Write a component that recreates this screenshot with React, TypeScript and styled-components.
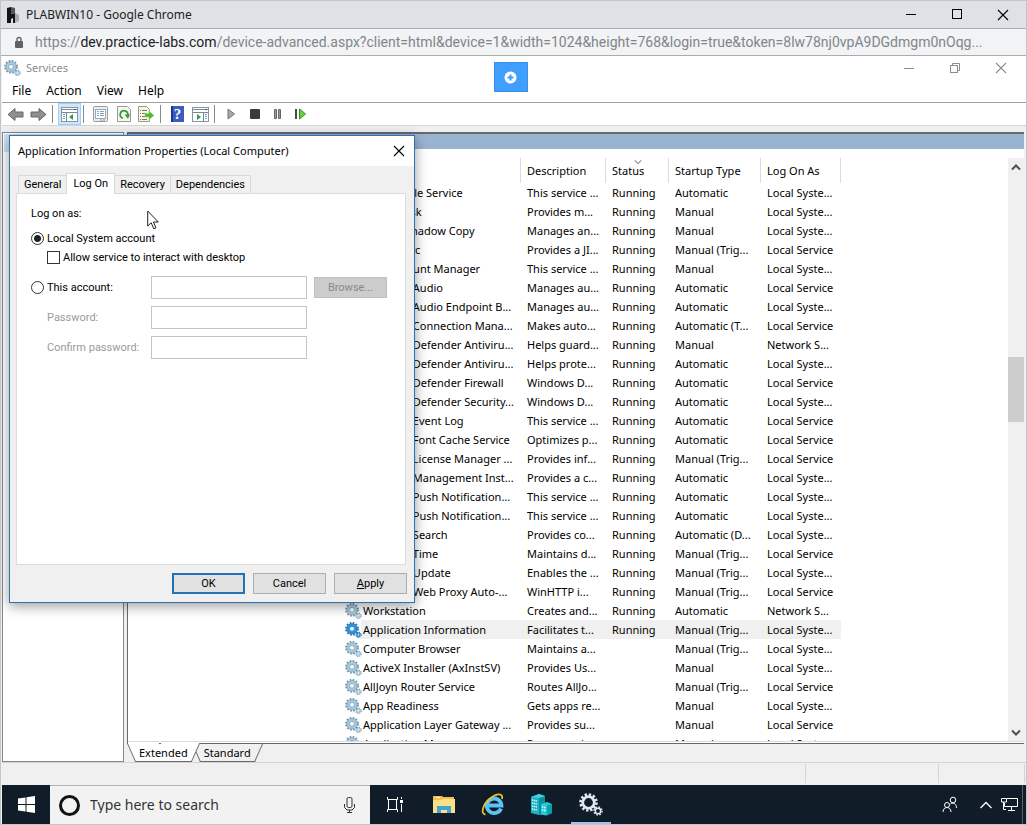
import React from 'react';
import styled, { createGlobalStyle, css } from 'styled-components';

const GlobalStyle = createGlobalStyle`
  *, *::before, *::after { box-sizing: border-box; }
  html, body { margin: 0; padding: 0; }
  body { font-family: "Noto Sans", "Open Sans", sans-serif; font-size: 11px; line-height: 16px; color: #000; }
  button, input { font: inherit; color: inherit; margin: 0; }
  button { padding: 0; border: 0; background: none; }
  svg { display: block; flex: none; }
`;

/* ---------- Browser frame ---------- */

const BrowserWindow = styled.div`
  display: flex;
  flex-direction: column;
  height: 100vh;
  overflow: hidden;
  background: #f0f0f0;
  border: 1px solid #c3c5c9;
`;

const BrowserTitle = styled.header`
  display: flex;
  flex: none;
  align-items: center;
  gap: 5px;
  height: 28px;
  padding-left: 4px;
  background: #dee1e6;
  border-bottom: 1px solid #a9abae;
  color: #222;
`;

const BrowserName = styled.h1`
  flex: 1;
  margin: 0;
  font-size: 12px;
  font-weight: 400;
`;

const WindowButtons = styled.div<{ $muted?: boolean }>`
  display: flex;
  color: ${p => (p.$muted ? '#8c8c8c' : '#000')};
`;

const WindowButton = styled.button`
  display: flex;
  align-items: center;
  justify-content: center;
  width: 46px;
  height: 24px;
`;

const AddressBar = styled.div`
  display: flex;
  flex: none;
  align-items: center;
  gap: 11px;
  height: 27px;
  padding-left: 13px;
  background: #f1f3f4;
  border-bottom: 1px solid #a9abae;
`;

const Address = styled.div`
  flex: 1;
  overflow: hidden;
  font-family: Roboto, "Noto Sans", sans-serif;
  font-size: 14px;
  line-height: 20px;
  white-space: nowrap;
  color: #80868b;
  b { font-weight: 400; color: #202124; }
`;

/* ---------- Remote desktop ---------- */

const Desktop = styled.main`
  position: relative;
  display: flex;
  flex: 1;
  flex-direction: column;
  min-height: 0;
  padding-left: 1px;
`;

const OverlayButton = styled.button`
  position: absolute;
  top: 6px;
  left: 50%;
  display: flex;
  align-items: center;
  justify-content: center;
  width: 34px;
  height: 30px;
  margin-left: -20px;
  background: #409eff;
  border: 1px solid #3a8ee6;
`;

const AppTitle = styled.div`
  display: flex;
  flex: none;
  align-items: center;
  gap: 5px;
  height: 24px;
  padding: 0 2px;
  background: #fff;
  color: #8c8c8c;
  h2 { flex: 1; margin: 0; font-size: 11px; line-height: 18px; font-weight: 400; }
`;

const MenuBar = styled.nav`
  display: flex;
  flex: none;
  gap: 15px;
  height: 23px;
  padding-left: 10px;
  background: #fff;
  border-bottom: 1px solid #a0a0a0;
  button { font-size: 12px; }
`;

const ToolBar = styled.div`
  display: flex;
  flex: none;
  align-items: center;
  height: 23px;
  padding-left: 2px;
  background: #fff;
  border-bottom: 1px solid #d6d6d6;
`;

const ToolButton = styled.button<{ $active?: boolean }>`
  display: flex;
  align-items: center;
  justify-content: center;
  width: 23px;
  height: 22px;
  ${p => p.$active && css`
    background: #cce8ff;
    border: 1px solid #99d1ff;
  `}
`;

const ToolDivider = styled.span`
  width: 1px;
  height: 18px;
  margin: 0 5px 0 2px;
  background: #8a8a8a;
`;

const Panes = styled.div`
  display: flex;
  flex: 1;
  gap: 3px;
  min-height: 0;
  padding: 6px 2px 0 0;
`;

const TreePane = styled.aside`
  flex: none;
  width: 122px;
  padding: 1px;
  background: #fff;
  border: 1px solid #828790;
`;

const TreeHeader = styled.div`
  height: 18px;
  background: #cfe3f5;
`;

const ResultPane = styled.section`
  display: flex;
  flex: 1;
  flex-direction: column;
  min-width: 0;
`;

const ResultView = styled.div`
  display: flex;
  flex: 1;
  flex-direction: column;
  min-height: 0;
  background: #fff;
  border: solid #696969;
  border-width: 2px 0 1px 1px;
`;

const BlueBar = styled.div`
  flex: none;
  height: 15px;
  background: #99b4d1;
`;

const ListArea = styled.div`
  display: flex;
  flex: 1;
  justify-content: space-between;
  min-height: 0;
  margin-bottom: 1px;
  padding: 9px 0 0 216px;
  border-bottom: 1px solid #dcdcdc;
`;

const ListClip = styled.div`
  overflow: hidden;
`;

const ServiceTable = styled.table`
  width: 497px;
  table-layout: fixed;
  border-collapse: separate;
  border-spacing: 0;
  th, td {
    padding: 0 0 0 6px;
    overflow: hidden;
    font-weight: 400;
    text-align: left;
    white-space: nowrap;
  }
  th {
    position: relative;
    height: 25px;
    border-right: 1px solid #dcdcdc;
  }
  td { height: 19px; line-height: 18px; }
  td:first-child { padding: 0 0 0 1px; }
`;

const ServiceRow = styled.tr<{ $selected?: boolean }>`
  ${p => p.$selected && css`
    background: linear-gradient(to right, #fff 17px, #f0f0f0 17px);
  `}
`;

const ServiceName = styled.span`
  display: flex;
  align-items: center;
  gap: 1px;
  height: 18px;
`;

const SortMark = styled.span`
  position: absolute;
  top: 1px;
  left: 28px;
`;

const ScrollBar = styled.div`
  display: flex;
  flex: none;
  flex-direction: column;
  width: 16px;
  background: #f0f0f0;
`;

const ScrollButton = styled.button`
  display: flex;
  flex: none;
  align-items: center;
  justify-content: center;
  height: 18px;
`;

const ScrollTrack = styled.div`
  display: flex;
  flex: 1;
  flex-direction: column;
  &::before { content: ''; flex: 181; }
  &::after { content: ''; flex: 302; }
`;

const ScrollThumb = styled.div`
  flex: 65;
  background: #cdcdcd;
`;

const ViewTabs = styled.div`
  display: flex;
  flex: none;
  height: 18px;
  padding-left: 4px;
`;

const ViewTab = styled.button<{ $active?: boolean }>`
  position: relative;
  z-index: ${p => (p.$active ? 1 : 0)};
  height: 18px;
  padding: 0 8px;
  &::before, &::after {
    content: '';
    position: absolute;
    z-index: -1;
    top: ${p => (p.$active ? -1 : 0)}px;
    bottom: 0;
    background: ${p => (p.$active ? '#fff' : '#f0f0f0')};
    border-bottom: 1px solid #696969;
  }
  &::before { left: 0; right: 50%; border-left: 1px solid #696969; transform: skewX(24deg); }
  &::after { left: 40%; right: 0; border-right: 1px solid #696969; transform: skewX(-24deg); }
`;

const StatusBar = styled.footer`
  display: grid;
  flex: none;
  grid-template-columns: 1fr 133px 86px;
  height: 23px;
  padding: 1px 1px 2px 0;
  border-top: 1px solid #d4d4d4;
  span { border-right: 1px solid #d4d4d4; }
`;

/* ---------- Dialog ---------- */

const Dialog = styled.form`
  position: absolute;
  top: 79px;
  left: 8px;
  display: flex;
  flex-direction: column;
  width: 406px;
  height: 468px;
  background: #f0f0f0;
  border: 1px solid #2b72b0;
  box-shadow: 0 3px 12px rgba(0, 0, 0, 0.4);
`;

const DialogTitle = styled.div`
  display: flex;
  flex: none;
  align-items: center;
  justify-content: space-between;
  height: 30px;
  padding: 0 9px 0 8px;
  background: #fff;
  h3 { margin: 0; font-size: 11px; font-weight: 400; }
`;

const DialogBody = styled.div`
  display: flex;
  flex: 1;
  flex-direction: column;
  padding: 7px 8px 8px 6px;
  font-family: Roboto, "Noto Sans", sans-serif;
`;

const TabRow = styled.div`
  display: flex;
  align-items: flex-end;
  height: 20px;
  padding-left: 3px;
`;

const Tab = styled.button<{ $active?: boolean }>`
  height: 18px;
  padding: 1px 5px 0;
  border: 1px solid #d9d9d9;
  border-bottom: 0;
  margin-left: -1px;
  ${p => p.$active && css`
    position: relative;
    height: 21px;
    margin-bottom: -1px;
    padding: 0 6px 1px;
    background: #fff;
  `}
`;

const TabPage = styled.fieldset`
  display: flex;
  flex: 1;
  flex-direction: column;
  min-width: 0;
  margin: 0 0 8px;
  padding: 12px 18px 0 14px;
  background: #fff;
  border: 1px solid #dcdcdc;
`;

const Legend = styled.legend`
  float: left;
  padding: 0;
  margin-bottom: 7px;
`;

const ChoiceLabel = styled.label<{ $indent?: boolean }>`
  display: flex;
  align-items: center;
  gap: 3px;
  height: 19px;
  padding-left: ${p => (p.$indent ? 16 : 0)}px;
`;

const Radio = styled.input.attrs({ type: 'radio' })`
  appearance: none;
  width: 13px;
  height: 13px;
  border: 1px solid #333;
  border-radius: 50%;
  background: #fff;
  &:checked { background: radial-gradient(circle, #222 3px, #fff 4px); }
`;

const CheckBox = styled.input.attrs({ type: 'checkbox' })`
  appearance: none;
  width: 13px;
  height: 13px;
  border: 1px solid #333;
  background: #fff;
`;

const AccountGrid = styled.div`
  display: grid;
  grid-template-columns: 120px 156px 73px;
  row-gap: 7px;
  align-items: center;
  margin-top: 9px;
  > button { margin-left: 7px; margin-right: -7px; }
`;

const FieldLabel = styled.label`
  padding-left: 16px;
  color: #9a9a9a;
`;

const TextBox = styled.input`
  width: 100%;
  height: 23px;
  padding: 0 4px;
  background: #fff;
  border: 1px solid #c4c4c4;
  border-radius: 0;
`;

const PushButton = styled.button<{ $primary?: boolean }>`
  width: 73px;
  height: 21px;
  background: #e1e1e1;
  border: ${p => (p.$primary ? '2px solid #2272b4' : '1px solid #adadad')};
  &:disabled { background: #ccc; border-color: #bfbfbf; color: #8a8a8a; }
`;

const DialogActions = styled.div`
  display: flex;
  justify-content: flex-end;
  gap: 8px;
  margin-right: -1px;
`;

const Pointer = styled.svg`
  position: absolute;
  top: 154px;
  left: 146px;
`;

/* ---------- Taskbar ---------- */

const TaskBar = styled.div`
  display: flex;
  flex: none;
  height: 39px;
  margin-left: 1px;
  background: #101c27;
  color: #fff;
`;

const TaskButton = styled.button<{ $active?: boolean; $start?: boolean }>`
  display: flex;
  align-items: center;
  justify-content: center;
  width: ${p => (p.$start ? 48 : 49)}px;
  ${p => p.$active && css`
    background: linear-gradient(#9cc3ea, #9cc3ea) center bottom / 40px 2px no-repeat;
  `}
`;

const SearchBox = styled.label`
  display: flex;
  align-items: center;
  width: 320px;
  padding: 0 14px 0 8px;
  background: #f2f2f2;
  border-top: 1px solid #b5b5b5;
  color: #333;
  input {
    flex: 1;
    min-width: 0;
    padding: 0 0 0 9px;
    border: 0;
    background: none;
    font-size: 14px;
    &::placeholder { color: #333; opacity: 1; }
  }
`;

const Tray = styled.div`
  display: flex;
  align-items: center;
  gap: 8px;
  margin: 0 3px 0 auto;
  padding-right: 4px;
  border-right: 1px solid #57616b;
  button:first-child { margin-right: 13px; }
`;

/* ---------- Icons ---------- */

const MinimizeIcon = () => (
  <svg width="11" height="11" stroke="currentColor"><path d="M0 5.500H10" /></svg>
);
const MaximizeIcon = () => (
  <svg width="11" height="11" fill="none" stroke="currentColor"><rect x=".5" y=".5" width="9" height="9" /></svg>
);
const RestoreIcon = () => (
  <svg width="11" height="11" fill="none" stroke="currentColor"><rect x=".5" y="2.500" width="7" height="7" /><path d="M2.500 2.500V.5h7v7h-2" /></svg>
);
const CloseIcon = () => (
  <svg width="12" height="12" stroke="currentColor" strokeWidth="1.100"><path d="M1 1l10 10M11 1L1 11" /></svg>
);

const PracticeIcon = () => (
  <svg width="16" height="18">
    <path d="M2 2l4-1v7l4-1v10H8v-5l-2 1v4H2z" fill="#151515" />
    <path d="M6 1l4 1v5L6 8z" fill="#555" />
    <path d="M10 7l4 2v6l-4 2z" fill="#a9adb3" />
  </svg>
);

const LockIcon = () => (
  <svg width="10" height="13"><rect x="1" y="5" width="8" height="7" rx="1" fill="#5f6368" /><path d="M3 5V3.500a2 2 0 014 0V5" fill="none" stroke="#5f6368" strokeWidth="1.400" /></svg>
);

const PlusCircle = () => (
  <svg width="13" height="13"><circle cx="6.500" cy="6.500" r="6" fill="#fff" /><path d="M6.500 3.500v6M3.500 6.500h6" stroke="#409eff" strokeWidth="2" /></svg>
);

const Gears = ({ solid = false }: { solid?: boolean }) => {
  const edge = solid ? '#1673b8' : '#6f93ab';
  const fill = solid ? '#2d8fd8' : '#a9cbe0';
  return (
    <svg width="17" height="16" viewBox="0 0 17 16" fill="none">
      <circle cx="7" cy="6.800" r="6" stroke={edge} strokeWidth="1.800" strokeDasharray="1.700 1.440" />
      <circle cx="7" cy="6.800" r="3.900" stroke={fill} strokeWidth="2.700" />
      <circle cx="7" cy="6.800" r="5.200" stroke={edge} strokeWidth=".6" />
      <circle cx="7" cy="6.800" r="2.400" stroke={edge} strokeWidth=".8" fill="#fff" />
      <circle cx="13.500" cy="12.800" r="2.500" stroke={edge} strokeWidth="1.400" strokeDasharray="1.100 .86" />
      <circle cx="13.500" cy="12.800" r="1.500" stroke={fill} strokeWidth="1.500" />
    </svg>
  );
};

const ArrowIcon = ({ flip = false }: { flip?: boolean }) => (
  <svg width="17" height="15" viewBox="0 0 17 15">
    <path d="M1 7.500L8 1.500v3.500h8v5H8v3.500z" transform={flip ? 'matrix(-1 0 0 1 17 0)' : undefined} fill="#8f8f8f" stroke="#666" />
  </svg>
);
const PaneIcon = ({ right = false }: { right?: boolean }) => (
  <svg width="17" height="15" viewBox="0 0 17 15">
    <rect x=".5" y=".5" width="16" height="14" fill="#fff" stroke="#8a94a0" />
    <path d="M1 2.500h11M1 5.500h15" stroke="#788594" /><path d="M12.500 2.500h3" stroke="#345" />
    <path d={right ? 'M11.500 6v8' : 'M5.500 6v8'} stroke="#788594" />
    <path d={right ? 'M13 7.500h2M13 9.500h2M13 11.500h2' : 'M2 7.500h2M2 9.500h2M2 11.500h2'} stroke="#65a1d2" />
    <path d={right ? 'M5 7v6l4-3z' : 'M12 7v6l-4-3z'} fill="#2e9e3c" />
  </svg>
);
const PropertiesIcon = () => (
  <svg width="15" height="16" viewBox="0 0 15 16">
    <rect x=".5" y=".5" width="14" height="15" rx="1" fill="#eee" stroke="#9a9a9a" />
    <rect x="2.500" y="3.500" width="10" height="9" fill="#fff" stroke="#9ab" />
    <path d="M4 5.500h2M7 5.500h4M4 7.500h2M7 7.500h4M4 9.500h2M7 9.500h4" stroke="#7ba7cb" /><path d="M7 14h2M10 14h2" stroke="#888" />
  </svg>
);
const RefreshIcon = () => (
  <svg width="14" height="16" viewBox="0 0 14 16">
    <path d="M.5.5h10l3 3v12H.5z" fill="#f7f7ef" stroke="#999" />
    <path d="M6 12.200A3.800 3.800 0 1110.800 9" fill="none" stroke="#34a03c" strokeWidth="1.800" />
    <path d="M7.500 8.500H13L11 13z" fill="#34a03c" />
  </svg>
);
const ExportIcon = () => (
  <svg width="17" height="16" viewBox="0 0 17 16">
    <path d="M.5.5h8l3 3v12H.5z" fill="#faf6dc" stroke="#999" />
    <path d="M2 4.500h1M4 4.500h5M2 7.500h1M4 7.500h3M2 10.500h1M4 10.500h3M2 13.500h1M4 13.500h5" stroke="#777" />
    <path d="M7 7.500h4V5l5 4.500-5 4V11H7z" fill="#52b830" stroke="#8ad66e" strokeWidth=".5" />
  </svg>
);
const HelpBox = styled.span`
  width: 13px;
  height: 16px;
  background: linear-gradient(to right, #22358c 2px, #3a5bc0 2px);
  color: #fff;
  font-family: "Liberation Serif", serif;
  font-size: 15px;
  font-weight: 700;
`;
const PlayIcon = () => (
  <svg width="9" height="12"><path d="M1 1l6.500 5L1 11z" fill="#a8a8a8" stroke="#777" /></svg>
);
const StopIcon = () => (
  <svg width="10" height="10"><rect width="10" height="10" rx="1" fill="#3b3b3b" /></svg>
);
const PauseIcon = () => (
  <svg width="9" height="10"><path d="M1.500.5h2v9h-2zM5.500.5h2v9h-2z" fill="#999" stroke="#666" /></svg>
);
const RestartIcon = () => (
  <svg width="13" height="12"><rect x="1" y="1" width="2" height="10" fill="#4a4a4a" /><path d="M5.500 1l6 5-6 5z" fill="#65d044" stroke="#2e9420" /></svg>
);

const Chevron = ({ down = false, thin = false }: { down?: boolean; thin?: boolean }) => (
  <svg width={thin ? 8 : 10} height={thin ? 6 : 7} viewBox="0 0 10 7" fill="none" stroke={thin ? '#888' : '#505050'} strokeWidth={thin ? 1.3 : 2}>
    <path d={down ? 'M1 1.500l4 4 4-4' : 'M1 5.500l4-4 4 4'} />
  </svg>
);

const StartIcon = () => (
  <svg width="17" height="17" viewBox="0 0 17 17" fill="#fff"><path d="M0 2.500l7.500-1V8H0zM8.500 1.300L17 0v8H8.500zM0 9h7.500v6.500L0 14.500zM8.500 9H17v8l-8.500-1.300z" /></svg>
);
const CortanaIcon = () => (
  <svg width="23" height="23"><circle cx="11.500" cy="11.500" r="9" fill="none" stroke="#111" strokeWidth="3" /></svg>
);
const MicIcon = () => (
  <svg width="13" height="18" fill="none" stroke="#333"><rect x="4" y="1.500" width="5" height="10" rx="1.500" /><path d="M1.500 8v3.500l2.500 2.500h5l2.500-2.500V8M6.500 14v3M4 16.500h5" /></svg>
);
const TaskViewIcon = () => (
  <svg width="18" height="17" fill="none" stroke="#fff"><path d="M1.500 1v2.500h10V1M1.500 16v-2.500h10V16M2.500 3.500v10M10.500 3.500v10M15.500 1v2M15.500 8v8" /><rect x="14" y="4" width="3" height="3" fill="#fff" stroke="none" /></svg>
);
const FolderIcon = () => (
  <svg width="22" height="19" viewBox="0 0 22 19">
    <path d="M0 1h9l1 1h11v4H0z" fill="#efc055" /><path d="M3 2h4v1H3z" fill="#fff3c4" />
    <path d="M0 5h9l1-1h12v14H0z" fill="#fbdf86" />
    <path d="M4 18v-7h14v7h-4v-3H8v3z" fill="#43a6d0" />
  </svg>
);
const ExplorerIcon = () => (
  <svg width="24" height="24" viewBox="0 0 24 24" fill="none">
    <path d="M20 15.500a7.300 7.300 0 11.500-3H8" stroke="#5cc4f4" strokeWidth="3.800" />
    <path d="M4.500 21.500C-1 21 2 11 9 5.500S22.500 0 21 6" stroke="#edc034" strokeWidth="1.800" />
  </svg>
);
const ServerIcon = () => (
  <svg width="23" height="23" viewBox="0 0 23 23">
    <path d="M1 4l8-3 6 2v18l-6 1-8-2z" fill="#1fb2c4" /><path d="M9 5l6-2v18l-6 1z" fill="#0c8c9f" />
    <path d="M1 4l8-3 6 2-6 2z" fill="#3fd4dc" />
    <path d="M11 11l6-2 5 2v9l-6 2.500-5-1z" fill="#24cbd7" /><path d="M17 12.500l5-1.500v9l-5 2.500z" fill="#0f9eae" />
    <path d="M2 7l5 1M2 10l5 1M2 13l5 1M2 16l5 1M12 14l4 .7M12 17l4 .7" stroke="#d9fbff" strokeDasharray="1.400 .7" strokeWidth="1.600" />
  </svg>
);
const TaskGearsIcon = () => (
  <svg width="24" height="23" viewBox="0 0 24 23" fill="none" stroke="#dfe6ee">
    <circle cx="9.500" cy="9.500" r="8" strokeWidth="2.600" strokeDasharray="2.400 1.789" /><circle cx="9.500" cy="9.500" r="5.800" strokeWidth="2.800" />
    <circle cx="19" cy="18" r="4" strokeWidth="1.500" strokeDasharray="1.600 1.541" /><circle cx="19" cy="18" r="2.700" strokeWidth="1.500" />
  </svg>
);
const PeopleIcon = () => (
  <svg width="16" height="17" fill="none" stroke="#fff"><circle cx="5" cy="9" r="2.500" /><path d="M1 16c0-6 8-6 8 0" /><circle cx="11" cy="4" r="2.800" /><path d="M8.500 8c3-2 6 0 6 4" /></svg>
);
const TrayChevron = () => (
  <svg width="14" height="10" fill="none" stroke="#fff" strokeWidth="1.300"><path d="M1.500 8L7 2.500 12.500 8" /></svg>
);
const NetworkIcon = () => (
  <svg width="17" height="15" fill="none" stroke="#fff"><path d="M6 1.500h10.500v8H3.500V6M10.500 9.500v4M7 13.500h7M.5 1.500h5v3.500h-5zM2.500 5v7.500H5" /></svg>
);

/* ---------- Data ---------- */

const S = 'Local Syste...';
const L = 'Local Service';
const N = 'Network S...';
const R = 'Running';
const A = 'Automatic';
const M = 'Manual';
const T = 'Manual (Trig...';

const services: string[][] = [
  ['User Profile Service', 'This service ...', R, A, S],
  ['Virtual Disk', 'Provides m...', R, M, S],
  ['Volume Shadow Copy', 'Manages an...', R, M, S],
  ['WarpJITSvc', 'Provides a JI...', R, T, L],
  ['Web Account Manager', 'This service ...', R, M, S],
  ['Windows Audio', 'Manages au...', R, A, L],
  ['Windows Audio Endpoint B...', 'Manages au...', R, A, S],
  ['Windows Connection Mana...', 'Makes auto...', R, 'Automatic (T...', L],
  ['Windows Defender Antiviru...', 'Helps guard...', R, M, N],
  ['Windows Defender Antiviru...', 'Helps prote...', R, A, S],
  ['Windows Defender Firewall', 'Windows D...', R, A, L],
  ['Windows Defender Security...', 'Windows D...', R, A, S],
  ['Windows Event Log', 'This service ...', R, A, L],
  ['Windows Font Cache Service', 'Optimizes p...', R, A, L],
  ['Windows License Manager ...', 'Provides inf...', R, T, L],
  ['Windows Management Inst...', 'Provides a c...', R, A, S],
  ['Windows Push Notification...', 'This service ...', R, A, S],
  ['Windows Push Notification...', 'This service ...', R, A, S],
  ['Windows Search', 'Provides co...', R, 'Automatic (D...', S],
  ['Windows Time', 'Maintains d...', R, T, L],
  ['Windows Update', 'Enables the ...', R, T, S],
  ['WinHTTP Web Proxy Auto-...', 'WinHTTP i...', R, T, L],
  ['Workstation', 'Creates and...', R, A, N],
  ['Application Information', 'Facilitates t...', R, T, S],
  ['Computer Browser', 'Maintains a...', '', T, S],
  ['ActiveX Installer (AxInstSV)', 'Provides Us...', '', M, S],
  ['AllJoyn Router Service', 'Routes AllJo...', '', T, L],
  ['App Readiness', 'Gets apps re...', '', M, S],
  ['Application Layer Gateway ...', 'Provides su...', '', M, L],
  ['Application Management', 'Processes in...', '', M, S],
];

const SELECTED = 'Application Information';

/* ---------- Sections ---------- */

const Tools = () => (
  <ToolBar>
    <ToolButton aria-label="Back"><ArrowIcon /></ToolButton>
    <ToolButton aria-label="Forward"><ArrowIcon flip /></ToolButton>
    <ToolDivider />
    <ToolButton $active aria-label="Show console tree"><PaneIcon /></ToolButton>
    <ToolDivider />
    <ToolButton aria-label="Properties"><PropertiesIcon /></ToolButton>
    <ToolButton aria-label="Refresh"><RefreshIcon /></ToolButton>
    <ToolButton aria-label="Export list"><ExportIcon /></ToolButton>
    <ToolDivider />
    <ToolButton aria-label="Help"><HelpBox>?</HelpBox></ToolButton>
    <ToolButton aria-label="Show action pane"><PaneIcon right /></ToolButton>
    <ToolDivider />
    <ToolButton aria-label="Start"><PlayIcon /></ToolButton>
    <ToolButton aria-label="Stop"><StopIcon /></ToolButton>
    <ToolButton aria-label="Pause"><PauseIcon /></ToolButton>
    <ToolButton aria-label="Restart"><RestartIcon /></ToolButton>
  </ToolBar>
);

const ServiceList = () => (
  <ServiceTable>
    <colgroup>
      <col style={{ width: 177 }} />
      <col style={{ width: 85 }} />
      <col style={{ width: 63 }} />
      <col style={{ width: 92 }} />
      <col style={{ width: 80 }} />
    </colgroup>
    <thead>
      <tr>
        <th scope="col">Name</th>
        <th scope="col">Description</th>
        <th scope="col">Status<SortMark><Chevron down thin /></SortMark></th>
        <th scope="col">Startup Type</th>
        <th scope="col">Log On As</th>
      </tr>
    </thead>
    <tbody>
      {services.map(([name, ...cells], i) => (
        <ServiceRow key={i} $selected={name === SELECTED}>
          <td><ServiceName><Gears solid={name === SELECTED} />{name}</ServiceName></td>
          {cells.map((cell, j) => <td key={j}>{cell}</td>)}
        </ServiceRow>
      ))}
    </tbody>
  </ServiceTable>
);

const PropertiesDialog = () => (
  <Dialog onSubmit={e => e.preventDefault()}>
    <DialogTitle>
      <h3>Application Information Properties (Local Computer)</h3>
      <button type="button" aria-label="Close"><CloseIcon /></button>
    </DialogTitle>
    <DialogBody>
      <TabRow>
        <Tab type="button">General</Tab>
        <Tab type="button" $active>Log On</Tab>
        <Tab type="button">Recovery</Tab>
        <Tab type="button">Dependencies</Tab>
      </TabRow>
      <TabPage>
        <Legend>Log on as:</Legend>
        <ChoiceLabel><Radio name="account" defaultChecked />Local System account</ChoiceLabel>
        <ChoiceLabel $indent><CheckBox />Allow service to interact with desktop</ChoiceLabel>
        <AccountGrid>
          <ChoiceLabel><Radio name="account" />This account:</ChoiceLabel>
          <TextBox aria-label="Account name" />
          <PushButton type="button" disabled>Browse...</PushButton>
          <FieldLabel htmlFor="password">Password:</FieldLabel>
          <TextBox id="password" type="password" />
          <span />
          <FieldLabel htmlFor="confirm">Confirm password:</FieldLabel>
          <TextBox id="confirm" type="password" />
        </AccountGrid>
      </TabPage>
      <DialogActions>
        <PushButton $primary>OK</PushButton>
        <PushButton type="button">Cancel</PushButton>
        <PushButton type="button"><u>A</u>pply</PushButton>
      </DialogActions>
    </DialogBody>
  </Dialog>
);

export default function App() {
  return (
    <>
      <GlobalStyle />
      <BrowserWindow>
        <BrowserTitle>
          <PracticeIcon />
          <BrowserName>PLABWIN10 - Google Chrome</BrowserName>
          <WindowButtons>
            <WindowButton aria-label="Minimize browser"><MinimizeIcon /></WindowButton>
            <WindowButton aria-label="Maximize browser"><MaximizeIcon /></WindowButton>
            <WindowButton aria-label="Close browser"><CloseIcon /></WindowButton>
          </WindowButtons>
        </BrowserTitle>
        <AddressBar>
          <LockIcon />
          <Address>
            https://<b>dev.practice-labs.com</b>/device-advanced.aspx?client=html&amp;device=1&amp;width=1024&amp;height=768&amp;login=true&amp;token=8lw78nj0vpA9DGdmgm0nOqg...
          </Address>
        </AddressBar>
        <Desktop>
          <AppTitle>
            <Gears />
            <h2>Services</h2>
            <WindowButtons $muted>
              <WindowButton aria-label="Minimize"><MinimizeIcon /></WindowButton>
              <WindowButton aria-label="Restore"><RestoreIcon /></WindowButton>
              <WindowButton aria-label="Close window"><CloseIcon /></WindowButton>
            </WindowButtons>
          </AppTitle>
          <MenuBar>
            <button>File</button>
            <button>Action</button>
            <button>View</button>
            <button>Help</button>
          </MenuBar>
          <Tools />
          <Panes>
            <TreePane><TreeHeader /></TreePane>
            <ResultPane>
              <ResultView>
                <BlueBar />
                <ListArea>
                  <ListClip><ServiceList /></ListClip>
                  <ScrollBar>
                    <ScrollButton aria-label="Scroll up"><Chevron /></ScrollButton>
                    <ScrollTrack><ScrollThumb /></ScrollTrack>
                    <ScrollButton aria-label="Scroll down"><Chevron down /></ScrollButton>
                  </ScrollBar>
                </ListArea>
              </ResultView>
              <ViewTabs>
                <ViewTab $active>Extended</ViewTab>
                <ViewTab>Standard</ViewTab>
              </ViewTabs>
            </ResultPane>
          </Panes>
          <StatusBar><span /><span /><span /></StatusBar>
          <PropertiesDialog />
          <Pointer width="12" height="20" viewBox="0 0 12 20">
            <path d="M.7 1v15l3.500-3.200 2.600 6 2.200-1-2.600-5.800h4.900z" fill="#fff" stroke="#222" />
          </Pointer>
          <OverlayButton aria-label="Open toolbar"><PlusCircle /></OverlayButton>
        </Desktop>
        <TaskBar>
          <TaskButton $start aria-label="Start menu"><StartIcon /></TaskButton>
          <SearchBox>
            <CortanaIcon />
            <input type="text" placeholder="Type here to search" aria-label="Type here to search" />
            <MicIcon />
          </SearchBox>
          <TaskButton aria-label="Task view"><TaskViewIcon /></TaskButton>
          <TaskButton aria-label="File Explorer"><FolderIcon /></TaskButton>
          <TaskButton aria-label="Internet Explorer"><ExplorerIcon /></TaskButton>
          <TaskButton aria-label="Server Manager"><ServerIcon /></TaskButton>
          <TaskButton $active aria-label="Services"><TaskGearsIcon /></TaskButton>
          <Tray>
            <button aria-label="People"><PeopleIcon /></button>
            <button aria-label="Show hidden icons"><TrayChevron /></button>
            <button aria-label="Network"><NetworkIcon /></button>
          </Tray>
        </TaskBar>
      </BrowserWindow>
    </>
  );
}
